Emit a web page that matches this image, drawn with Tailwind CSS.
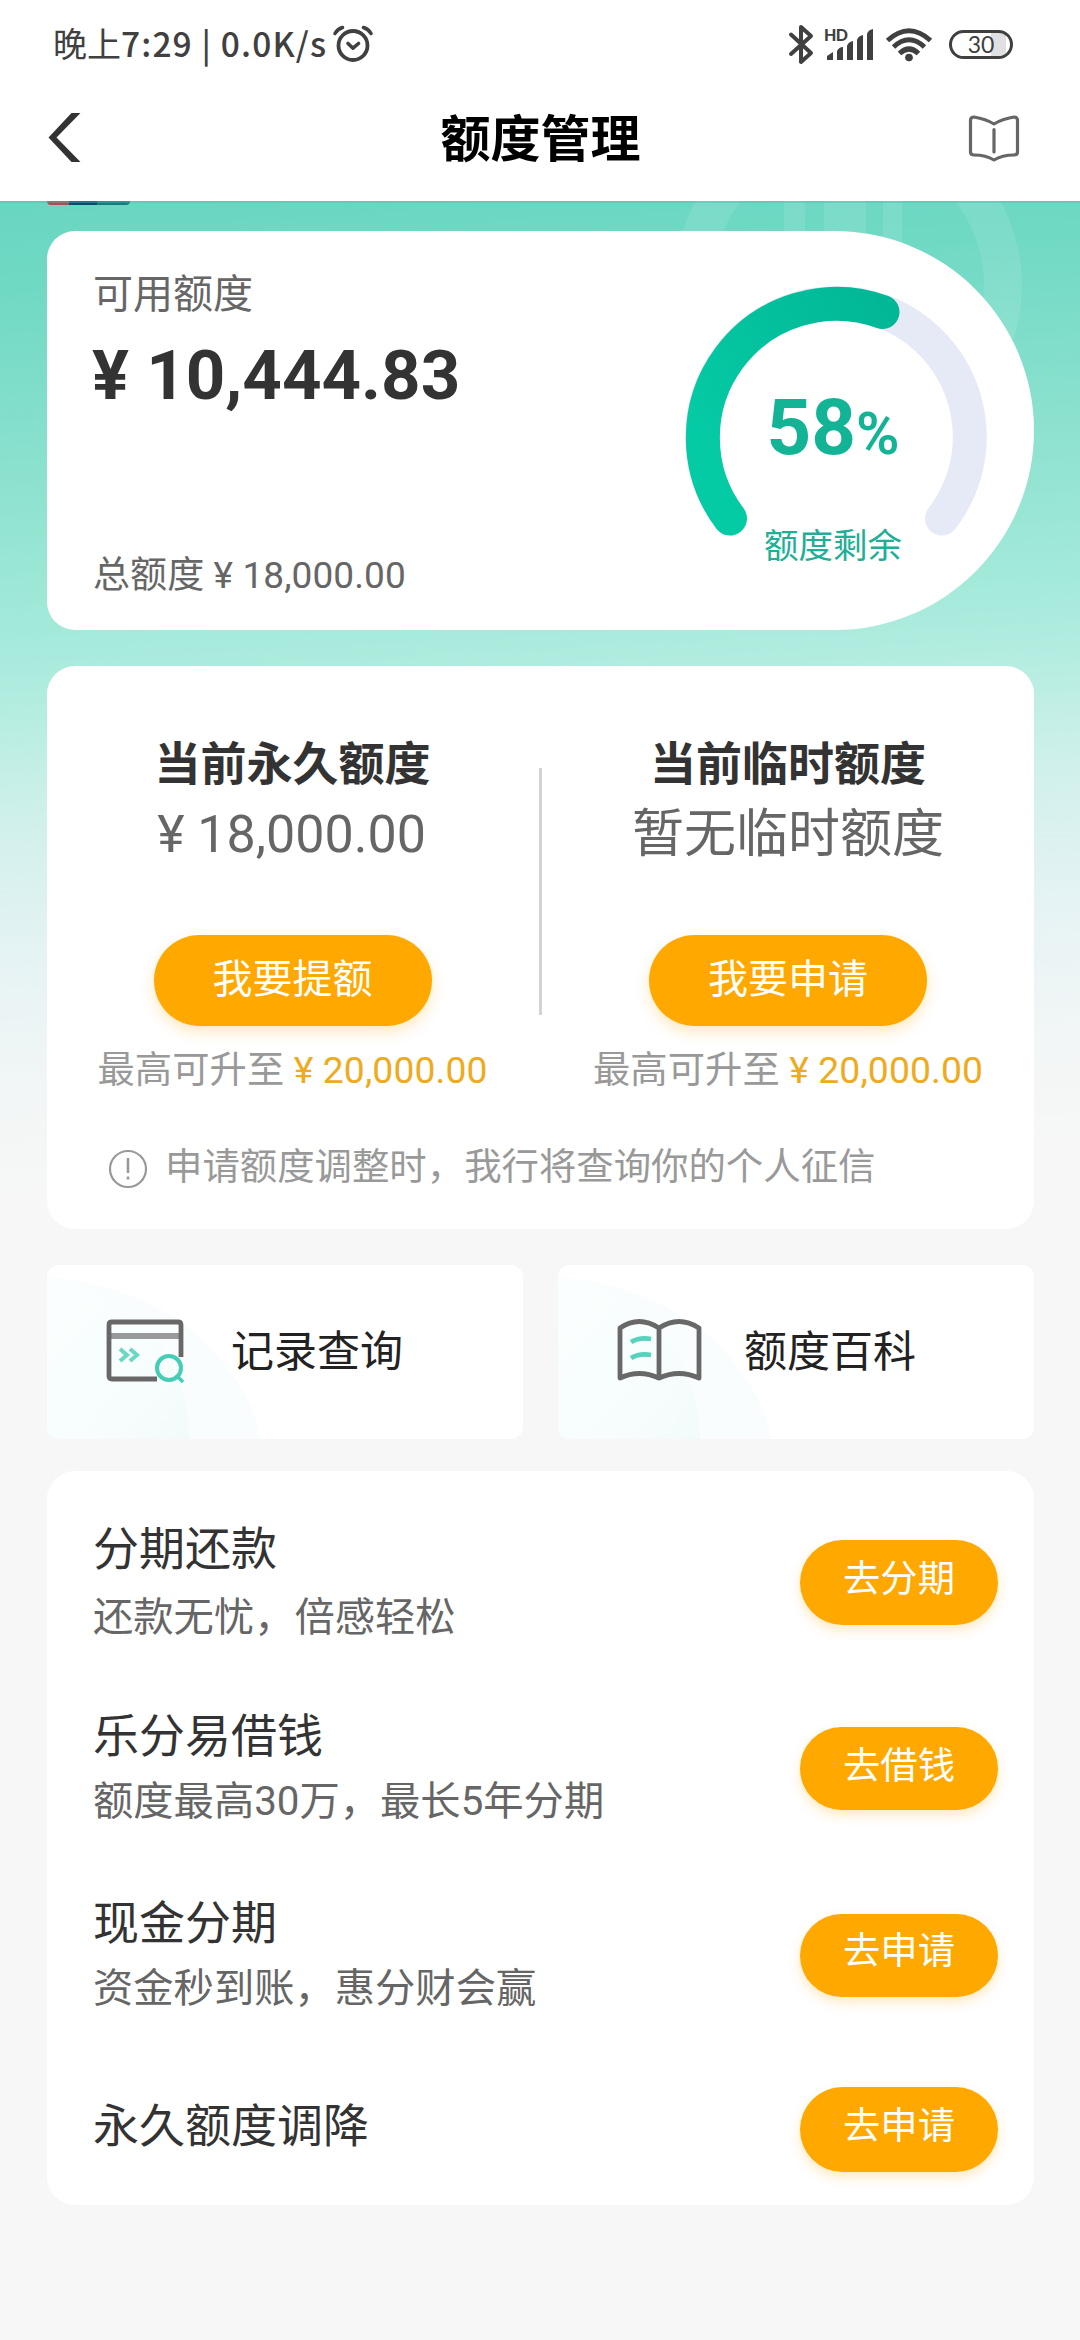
<!DOCTYPE html>
<html lang="zh-CN">
<head>
<meta charset="utf-8">
<title>额度管理</title>
<script src="https://cdn.jsdelivr.net/npm/@tailwindcss/browser@4"></script>
</head>
<body class="w-[1080px] h-[2340px] overflow-hidden bg-[#f7f7f7] font-[Roboto,'Noto_Sans_CJK_SC',sans-serif] text-[#333]">
<header class="h-[201px] bg-white">
  <div class="flex h-[88px] items-center pl-[53px] pr-[67px] text-[#404040]">
    <div class="flex w-[278px] items-center pb-[2px] font-['Noto_Sans_CJK_SC',sans-serif] leading-[44px] whitespace-nowrap"><span class="text-[34px]">晚上</span><span class="text-[33.500px] font-medium tracking-[1.150px]">7:29 | 0.0K/s</span></div>
    <svg class="ml-[1px] h-[40px] w-[42px]" viewBox="0 0 42 40" fill="none" stroke="#404040" stroke-linecap="round">
      <circle cx="21" cy="21.500" r="14.500" stroke-width="3.800"/>
      <path d="M3 9.500 Q5.500 5 10.500 3.500M39 9.500 Q36.500 5 31.500 3.500" stroke-width="3.600"/>
      <path d="M16 19.500l5 4.700l5.500-4.700" stroke-width="3.600" stroke-linejoin="round"/>
    </svg>
    <div class="ml-auto flex items-center">
      <svg class="h-[44px] w-[28px]" viewBox="0 0 28 44" fill="none" stroke="#404040" stroke-width="4" stroke-linecap="round" stroke-linejoin="round"><path d="M3 12.500L23 31L13 40V5L23 14L3 32"/></svg>
      <svg class="ml-[7px] h-[44px] w-[52px]" viewBox="0 0 52 44" fill="#404040">
        <text x="1" y="19" font-family="Lato" font-weight="900" font-size="16" textLength="24">HD</text>
        <path d="M4 38v-4l6-4v8zM14 38v-9q2-4 6-4v13zM24 38V24q1-4 6-5v19zM34 38V18q1-4 6-5v25zM44 38V12q1-4 6-5v31z"/>
      </svg>
      <svg class="ml-[10px] h-[44px] w-[48px]" viewBox="0 0 48 44" fill="none" stroke="#404040" stroke-width="5">
        <path d="M2.500 18.500Q24 -1 45.500 18.500M8.500 25Q24 10.500 39.500 25M14.500 31.500Q24 22.500 33.500 31.500"/>
        <path d="M20 35.500Q24 31.500 28 35.500L24 39.500z" fill="#404040" stroke="none"/>
        <circle cx="24" cy="35.500" r="3.800" fill="#404040" stroke="none"/>
      </svg>
      <div class="ml-[16px] flex h-[29px] w-[64px] items-center justify-center rounded-full border-[3px] border-[#404040] bg-[linear-gradient(to_right,transparent_39px,#e0e0e0_39px,#e0e0e0_54px,transparent_54px)] font-[Lato] text-[23px] leading-none">30</div>
    </div>
  </div>
  <div class="flex h-[113px] items-start justify-between pl-[47px] pr-[59px] pt-[25px]">
    <svg class="h-[50px] w-[54px]" viewBox="0 0 54 50" fill="#333"><path d="M24.500 0h9L9.500 24.500L33.500 49h-9L1.500 24.500z"/></svg>
    <h1 class="ml-[13px] text-[50px] font-bold leading-[54px] text-black">额度管理</h1>
    <svg class="mt-[1px] h-[50px] w-[54px]" viewBox="0 0 54 50" fill="none" stroke="#666" stroke-width="3.200" stroke-linejoin="round" stroke-linecap="round">
      <path d="M27 10Q19 5 7 3Q3.500 3 3.500 6.500V38Q3.500 41 7 41Q19 41 27 46Q35 41 47 41Q50.500 41 50.500 38V6.500Q50.500 3 47 3Q35 5 27 10zM27 15.500V38"/>
    </svg>
  </div>
</header>

<main class="relative h-[2139px] bg-[linear-gradient(177deg,#69d6c1_0px,#70d9c4_90px,#8ee2cf_290px,#a8ebdc_460px,#d0f0eb_620px,#e6f3f4_760px,#f3f6f6_900px,#f7f7f7_1010px)]">
  <svg class="absolute left-[670px] top-0 h-[280px] w-[360px]" viewBox="670 201 360 280" fill="#fff" fill-opacity=".1">
    <circle cx="848" cy="285" r="155" fill="none" stroke="#fff" stroke-opacity=".1" stroke-width="38"/>
    <path d="M784 201h21v60h-21zM824 201h42v60h-42zM883 201h19v60h-19z"/>
  </svg>
  <div class="absolute left-[47px] top-0 flex h-[4px] w-[83px] overflow-hidden rounded-b-[4px]"><i class="w-[22px] bg-[#b04b55]"></i><i class="w-[28px] bg-[#0c4a70]"></i><i class="flex-1 bg-[#187a7e]"></i></div>
  <div class="absolute left-0 top-0 h-[2px] w-full bg-[#5fb5a5]/40"></div>

  <div class="relative flex flex-col gap-[36px] pl-[47px] pr-[46px] pt-[30px]">
    <section class="flex h-[399px] w-[987px] justify-between rounded-l-[28px] rounded-r-[200px] bg-white pl-[46px] pr-[47px]">
      <div class="pt-[40px]">
        <div class="text-[40px] leading-[48px] text-[#666]">可用额度</div>
        <div class="mt-[17px] text-[69px] font-bold leading-[80px] ml-[-1px]">¥ 10,444.83</div>
        <div class="mt-[136px] text-[37px] leading-[48px] tracking-[0.100px] text-[#666]">总额度 ¥ 18,000.00</div>
      </div>
      <div class="relative mt-[55px] h-[302px] w-[302px]">
        <svg class="h-[302px] w-[302px]" viewBox="685 286 302 302" fill="none" stroke-width="34" stroke-linecap="round">
          <defs><linearGradient id="g" gradientUnits="userSpaceOnUse" x1="700" y1="450" x2="900" y2="330"><stop offset="0" stop-color="#05cba5"/><stop offset="1" stop-color="#02b796"/></linearGradient></defs>
          <path d="M730 518.500A133.800 133.800 0 1 1 942 518.500" stroke="#e6eaf7"/>
          <path d="M730 518.500A133.800 133.800 0 0 1 882.500 312" stroke="url(#g)"/>
        </svg>
        <div class="absolute left-[-3px] top-[97px] flex w-full items-baseline justify-center text-[#12b495]">
          <span class="text-[78px] font-bold leading-[90px]">58</span><span class="text-[59px] font-semibold">%</span>
        </div>
        <div class="absolute left-[-3px] top-[238px] w-full text-center text-[34.500px] leading-[44px] text-[#20ae96]">额度剩余</div>
      </div>
    </section>

    <section class="h-[563px] rounded-[28px] bg-white pt-[70px]">
      <div class="relative grid grid-cols-[491px_500px] text-center">
        <div class="flex flex-col items-center">
          <h2 class="text-[46px] font-bold leading-[56px]">当前永久额度</h2>
          <div class="mt-[13px] text-[52px] leading-[60px] text-[#666] ml-[-2px]">¥ 18,000.00</div>
          <button class="mt-[70px] h-[91px] w-[278px] rounded-full bg-[#ffa800] pb-[2px] text-[40px] text-white shadow-[0_6px_14px_rgba(255,168,0,0.25)]">我要提额</button>
          <div class="mt-[22px] text-[37.300px] leading-[44px] tracking-[0.100px] text-[#999]">最高可升至 <span class="text-[#eeab20]">¥ 20,000.00</span></div>
        </div>
        <div class="flex flex-col items-center">
          <h2 class="text-[46px] font-bold leading-[56px]">当前临时额度</h2>
          <div class="mt-[13px] text-[52px] leading-[60px] text-[#666]">暂无临时额度</div>
          <button class="mt-[70px] h-[91px] w-[278px] rounded-full bg-[#ffa800] pb-[2px] text-[40px] text-white shadow-[0_6px_14px_rgba(255,168,0,0.25)]">我要申请</button>
          <div class="mt-[22px] text-[37.300px] leading-[44px] tracking-[0.100px] text-[#999]">最高可升至 <span class="text-[#eeab20]">¥ 20,000.00</span></div>
        </div>
        <div class="absolute left-[492px] top-[32px] h-[247px] w-[3px] bg-[#d3d3d3]"></div>
      </div>
      <div class="mt-[53px] flex items-center pl-[61px] text-[37.400px] leading-[44px] text-[#999]">
        <svg class="mt-[3px] mr-[17px] h-[40px] w-[40px]" viewBox="0 0 40 40" fill="none" stroke="#999" stroke-width="2.200"><circle cx="20" cy="20" r="18"/><path d="M20 9v15M20 27.500v3" stroke-width="2.600"/></svg>
        <span>申请额度调整时，我行将查询你的个人征信</span>
      </div>
    </section>

    <div class="grid h-[174px] grid-cols-2 gap-[35px] text-[43px] text-[#222]">
      <div class="relative flex items-center overflow-hidden rounded-[12px] bg-white pl-[57px]">
        <svg class="absolute left-0 top-0 h-[174px] w-[240px]" viewBox="0 0 240 174">
          <defs><linearGradient id="w" x1="0" y1="0" x2="1" y2="1"><stop offset="0" stop-color="#fafefe"/><stop offset=".5" stop-color="#f8fefd"/><stop offset="1" stop-color="#f3fbfa"/></linearGradient></defs>
          <path d="M0 12Q110 22 170 90Q205 130 214 174H0z" fill="#fafdfe"/>
          <path d="M0 12Q60 18 102 62Q142 110 142 174H0z" fill="url(#w)"/>
        </svg>
        <svg class="relative mt-[-2px] h-[66px] w-[82px]" viewBox="0 0 82 66" fill="none" stroke="#686868" stroke-width="4.800">
          <path d="M4 18H78" stroke="#999" stroke-width="6"/>
          <path d="M53 61H8Q5 61 5 58V7Q5 4 8 4H74Q77 4 77 7V39"/>
          <circle cx="65" cy="50" r="12" stroke="#45cdb5" stroke-width="4"/>
          <path d="M72 57l7 7" stroke="#45cdb5" stroke-width="3.500"/>
          <path d="M16 31l7 6l-7 6M26 31l7 6l-7 6" stroke="#6bd8c5" stroke-width="4"/>
        </svg>
        <span class="relative ml-[45px]">记录查询</span>
      </div>
      <div class="relative flex items-center overflow-hidden rounded-[12px] bg-white pl-[57px]">
        <svg class="absolute left-0 top-0 h-[174px] w-[240px]" viewBox="0 0 240 174">
          <path d="M0 12Q110 22 170 90Q205 130 214 174H0z" fill="#fafdfe"/>
          <path d="M0 12Q60 18 102 62Q142 110 142 174H0z" fill="url(#w)"/>
        </svg>
        <svg class="relative mt-[-2px] h-[66px] w-[88px]" viewBox="0 0 88 66" fill="none" stroke="#686868" stroke-width="4.800" stroke-linejoin="round">
          <path d="M44 10Q24 -3 5 10V60Q24 51 44 60Q64 51 84 60V10Q64 -3 44 10zV60"/>
          <path d="M16 24q9-5 20-3M16 40q9-5 20-3" stroke="#55d2bc"/>
        </svg>
        <span class="relative ml-[41px]">额度百科</span>
      </div>
    </div>

    <section class="mt-[-4px] h-[734px] rounded-[28px] bg-white pl-[46px] pr-[36px] pt-[50px]">
      <div class="flex h-[187px] justify-between">
        <div><h3 class="text-[46px] leading-[56px]">分期还款</h3><p class="mt-[16px] text-[40.300px] leading-[50px] text-[#666]">还款无忧，倍感轻松</p></div>
        <button class="mt-[19px] h-[85px] w-[198px] rounded-full bg-[#ffa800] pb-[6px] text-[37.300px] text-white shadow-[0_5px_12px_rgba(255,168,0,0.25)]">去分期</button>
      </div>
      <div class="flex h-[187px] justify-between">
        <div><h3 class="text-[46px] leading-[56px]">乐分易借钱</h3><p class="mt-[13px] text-[40.300px] leading-[50px] text-[#666]">额度最高30万，最长5年分期</p></div>
        <button class="mt-[19px] h-[83px] w-[198px] rounded-full bg-[#ffa800] pb-[4px] text-[37.300px] text-white shadow-[0_5px_12px_rgba(255,168,0,0.25)]">去借钱</button>
      </div>
      <div class="flex h-[203px] justify-between">
        <div><h3 class="text-[46px] leading-[56px]">现金分期</h3><p class="mt-[13px] text-[40.300px] leading-[50px] text-[#666]">资金秒到账，惠分财会赢</p></div>
        <button class="mt-[19px] h-[83px] w-[198px] rounded-full bg-[#ffa800] pb-[8px] text-[37.300px] text-white shadow-[0_5px_12px_rgba(255,168,0,0.25)]">去申请</button>
      </div>
      <div class="flex justify-between">
        <h3 class="text-[46px] leading-[56px]">永久额度调降</h3>
        <button class="mt-[-11px] h-[85px] w-[198px] rounded-full bg-[#ffa800] pb-[6px] text-[37.300px] text-white shadow-[0_5px_12px_rgba(255,168,0,0.25)]">去申请</button>
      </div>
    </section>
  </div>
</main>
</body>
</html>
